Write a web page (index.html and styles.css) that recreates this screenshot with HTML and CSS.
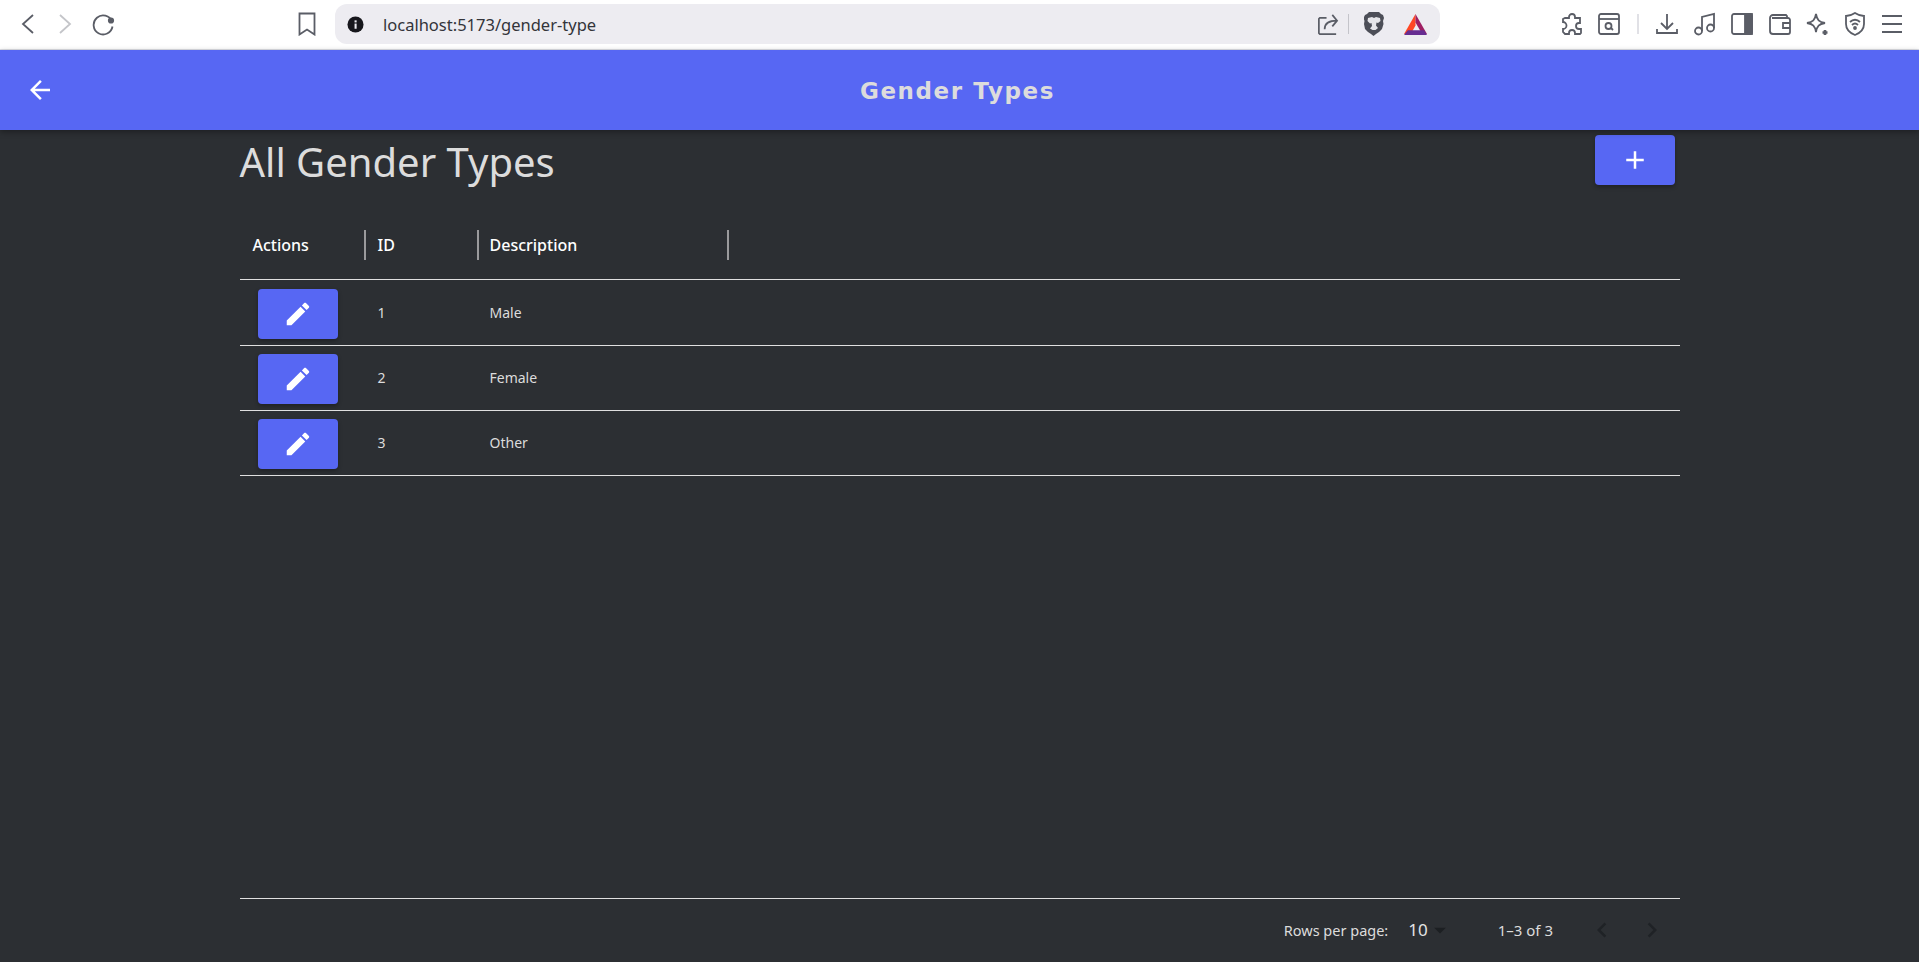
FILE: index.html
```html
<!DOCTYPE html>
<html lang="en">
<head>
  <meta charset="UTF-8" />
  <title>Gender Types</title>
  <link rel="stylesheet" href="styles.css">
</head>
<body>
  <div class="browser-bar">
    <div class="nav-icons">
      <svg class="tool-icon" viewBox="0 0 24 24"><path d="M17 3 7 12l10 9"/></svg>
      <svg class="tool-icon faded" viewBox="0 0 24 24"><path d="m7 3 10 9-10 9"/></svg>
      <svg class="tool-icon" viewBox="0 0 24 24"><path d="M21 9.500a9.500 9.500 0 1 0 .5 5"/><circle class="solid" cx="20" cy="8.500" r="2.200"/></svg>
    </div>
    <svg class="tool-icon bookmark" viewBox="0 0 24 24"><path d="M4.500 1.500h15v21l-7.500-5-7.500 5z"/></svg>
    <div class="url-pill">
      <svg class="info-icon" viewBox="0 0 18 18"><circle cx="9" cy="9" r="8.500"/><rect class="info-mark" x="8" y="8" width="2.200" height="5.500"/><rect class="info-mark" x="8" y="4.600" width="2.200" height="2.200"/></svg>
      <span class="url-text">localhost:5173/gender-type</span>
      <svg class="tool-icon share" viewBox="0 0 24 24"><path d="M11 5H4L3 6v15l1 1h17M9 17c0-6 4-9 13-9M17 2l5 6-5 6"/></svg>
      <span class="pill-divider"></span>
      <svg class="brave-icon" viewBox="0 0 20 24"><path class="brave-shield" d="M5 0h10l2 2 2 1 1 3-1 3 .5 3-1.500 5-3 3-3 2-2.500 2-2.500-2-3-2-3-3L0 12l.5-3-1-3L1 3l2-1z"/><path class="brave-face" d="M4 6l4-1 2 1 2-1 4 1 .5 3-2.500 2-1.500-.5-.5 3 2 2.500-2.500 2h-3L6 16.500l2-2.500-.5-3L6 11.500 3.500 9z"/></svg>
      <svg class="bat-icon" viewBox="0 0 24 22"><path fill="#ff4724" d="M12 0 0 21h7l5-9z"/><path fill="#9e1f63" d="M12 0l12 21h-5l-7-12z"/><path fill="#662d91" d="M0 22h24l-3-5H4z"/></svg>
    </div>
    <div class="ext-icons">
      <svg class="tool-icon" viewBox="0 0 24 24"><path d="M9 5a3 3 0 0 1 6 0v1h5v5h-1a3 3 0 0 0 0 6h2v4l-1 1h-5v-1a3 3 0 0 0-6 0v1H5l-2-2v-3a3 3 0 0 0 0-7V7l2-1h4z"/></svg>
      <svg class="tool-icon" viewBox="0 0 24 24"><rect x="2" y="2" width="20" height="20" rx="2"/><path d="M2 7h20"/><circle cx="11.500" cy="14" r="3"/><path d="m14 16 2 2"/></svg>
      <span class="ext-divider"></span>
      <svg class="tool-icon" viewBox="0 0 24 24"><path d="M12 2v15M6 11l6 6 6-6M2 17v4h20v-4"/></svg>
      <svg class="tool-icon" viewBox="0 0 24 24"><path d="M9 19V5l12-3v14"/><circle cx="5.500" cy="19" r="3.500"/><circle cx="17.500" cy="16" r="3.500"/></svg>
      <svg class="tool-icon" viewBox="0 0 24 24"><rect x="2" y="2" width="20" height="20" rx="2"/><rect class="solid" x="15" y="2" width="7" height="20"/></svg>
      <svg class="tool-icon" viewBox="0 0 24 24"><path d="M19 6V4l-1-1H5a3 3 0 0 0-3 3v13a3 3 0 0 0 3 3h15a2 2 0 0 0 2-2V8a2 2 0 0 0-2-2H4M22 11h-7v5h7"/></svg>
      <svg class="tool-icon" viewBox="0 0 24 24"><path d="M11 2c1 6 3 8 9 9-6 1-8 3-9 9-1-6-3-8-9-9 6-1 8-3 9-9z"/><path class="thick" d="M20 18v5M17.500 20.500h5"/></svg>
      <svg class="tool-icon" viewBox="0 0 24 24"><path d="M12 1c3 2 6 3 9 3v8c0 5-4 9-9 11-5-2-9-6-9-11V4c3 0 6-1 9-3z"/><path d="M7 10c3-3 7-3 10 0M9 13c2-2 4-2 6 0"/><circle class="solid" cx="12" cy="16" r="1"/></svg>
      <svg class="tool-icon" viewBox="0 0 24 24"><path d="M2 4h20M2 12h20M2 20h20"/></svg>
    </div>
  </div>

  <div class="app-header">
    <button class="back-btn" aria-label="Back">
      <svg viewBox="0 0 24 24"><path d="M20 11H7.830l5.590-5.590L12 4l-8 8 8 8 1.410-1.410L7.830 13H20z"/></svg>
    </button>
    <div class="app-title">Gender Types</div>
  </div>

  <div class="content">
    <div class="page-head">
      <h1 class="page-title">All Gender Types</h1>
      <button class="add-btn" aria-label="Add">
        <svg viewBox="0 0 24 24"><path d="M19 13h-6v6h-2v-6H5v-2h6V5h2v6h6v2z"/></svg>
      </button>
    </div>

    <div class="grid">
      <div class="grid-head">
        <div class="col col-actions">Actions</div>
        <div class="col col-id">ID</div>
        <div class="col col-desc">Description</div>
      </div>

      <div class="grid-rows">
        <div class="row">
          <div class="cell-actions">
            <button class="edit-btn" aria-label="Edit"><svg viewBox="0 0 24 24"><path d="M3 17.250V21h3.750L17.810 9.940l-3.750-3.750L3 17.250zM20.710 7.040c.39-.39.39-1.020 0-1.410l-2.340-2.340c-.39-.39-1.020-.39-1.410 0l-1.830 1.830 3.750 3.750 1.830-1.830z"/></svg></button>
          </div>
          <div class="cell cell-id">1</div>
          <div class="cell">Male</div>
        </div>
        <div class="row">
          <div class="cell-actions">
            <button class="edit-btn" aria-label="Edit"><svg viewBox="0 0 24 24"><path d="M3 17.250V21h3.750L17.810 9.940l-3.750-3.750L3 17.250zM20.710 7.040c.39-.39.39-1.020 0-1.410l-2.340-2.340c-.39-.39-1.020-.39-1.410 0l-1.830 1.830 3.750 3.750 1.830-1.830z"/></svg></button>
          </div>
          <div class="cell cell-id">2</div>
          <div class="cell">Female</div>
        </div>
        <div class="row">
          <div class="cell-actions">
            <button class="edit-btn" aria-label="Edit"><svg viewBox="0 0 24 24"><path d="M3 17.250V21h3.750L17.810 9.940l-3.750-3.750L3 17.250zM20.710 7.040c.39-.39.39-1.020 0-1.410l-2.340-2.340c-.39-.39-1.020-.39-1.410 0l-1.830 1.830 3.750 3.750 1.830-1.830z"/></svg></button>
          </div>
          <div class="cell cell-id">3</div>
          <div class="cell">Other</div>
        </div>
      </div>

      <div class="grid-foot">
        <span class="rows-label">Rows per page:</span>
        <span class="rows-select">10<svg viewBox="0 0 24 24"><path d="m7 10 5 5 5-5z"/></svg></span>
        <span class="rows-range">1–3 of 3</span>
        <svg class="page-arrow" viewBox="0 0 24 24"><path d="M15.410 7.410 14 6l-6 6 6 6 1.410-1.410L10.830 12z"/></svg>
        <svg class="page-arrow" viewBox="0 0 24 24"><path d="M10 6 8.590 7.410 13.170 12l-4.580 4.590L10 18l6-6z"/></svg>
      </div>
    </div>
  </div>
</body>
</html>
```

FILE: styles.css
```css
html, body {
  height: 100%;
}
body {
  margin: 0;
  display: flex;
  flex-direction: column;
  overflow: hidden;
  font-family: "Noto Sans", sans-serif;
  background-color: #2c2f33;
  color: #fff;
}
button {
  border: 0;
  padding: 0;
  cursor: pointer;
  color: #fff;
  display: flex;
  align-items: center;
  justify-content: center;
}
svg {
  fill: currentColor;
}

/* browser chrome */
.browser-bar {
  height: 50px;
  box-sizing: border-box;
  flex: none;
  display: flex;
  align-items: center;
  background-color: #fff;
  border-bottom: 1px solid #dfe0e6;
  padding: 0 15px 1px 15.500px;
}
.tool-icon {
  width: 24px;
  height: 24px;
  flex: none;
  fill: none;
  stroke: #5a5d66;
  stroke-width: 1.800;
}
.tool-icon.faded {
  stroke: #c4c5c9;
}
.tool-icon .solid {
  fill: #5a5d66;
}
.tool-icon .thick {
  stroke-width: 2.600;
}
.nav-icons {
  display: flex;
  align-items: center;
  gap: 13.500px;
}
.bookmark {
  margin-left: 180.500px;
}
.url-pill {
  margin-left: 16px;
  width: 1105px;
  height: 40px;
  flex: none;
  display: flex;
  align-items: center;
  background-color: #edecf1;
  border-radius: 12px;
  padding: 0 13px 0 12px;
  box-sizing: border-box;
}
.info-icon {
  width: 17px;
  height: 17px;
  flex: none;
  color: #17171c;
}
.info-mark {
  fill: #edecf1;
}
.url-text {
  margin-left: 19px;
  flex: 1;
  font-size: 16.500px;
  color: #33343a;
}
.share {
  width: 23px;
  height: 23px;
  margin-right: 9px;
}
.pill-divider {
  width: 1px;
  height: 20px;
  background-color: #c4c4ca;
}
.brave-icon {
  margin-left: 15px;
  width: 20px;
  height: 24px;
  flex: none;
}
.brave-shield {
  fill: #4c4e57;
}
.brave-face {
  fill: #e6e6ea;
}
.bat-icon {
  margin-left: 20px;
  width: 23px;
  height: 21px;
  flex: none;
}
.ext-icons {
  margin-left: auto;
  display: flex;
  align-items: center;
  gap: 13.500px;
}
.ext-divider {
  width: 2px;
  height: 20px;
  margin: 0 2.500px;
  background-color: #e1e1e6;
}

/* app header */
.app-header {
  height: 80px;
  flex: none;
  display: grid;
  grid-template-columns: 1fr auto 1fr;
  align-items: center;
  padding: 0 25px;
  background-color: #5767f3;
  box-shadow: 0 2px 6px rgba(0, 0, 0, 0.35);
  position: relative;
}
.back-btn {
  width: 30px;
  height: 30px;
  background: none;
  justify-self: start;
}
.back-btn svg {
  width: 30px;
  height: 30px;
}
.app-title {
  font-family: "DejaVu Sans", sans-serif;
  font-weight: bold;
  font-size: 23px;
  letter-spacing: 1.600px;
  color: #dcdcdc;
  margin: 2px 4px 0 0;
}

/* page content */
.content {
  flex: 1;
  width: 1440px;
  margin: 0 auto;
  display: flex;
  flex-direction: column;
  min-height: 0;
}
.page-head {
  display: flex;
  justify-content: space-between;
  align-items: flex-start;
  padding: 5px 5px 0 0;
}
.page-title {
  margin: 0;
  font-size: 40px;
  line-height: 54px;
  font-weight: normal;
  color: #dcdcdc;
}
.add-btn, .edit-btn {
  width: 80px;
  height: 50px;
  background-color: #5767f3;
  border-radius: 4px;
  box-shadow: 0 2px 4px rgba(0, 0, 0, 0.3);
}
.add-btn svg, .edit-btn svg {
  width: 30px;
  height: 30px;
}

/* table */
.grid {
  flex: 1;
  display: flex;
  flex-direction: column;
  margin-top: 25px;
  min-height: 0;
}
.grid-head {
  height: 62px;
  padding-bottom: 3px;
  flex: none;
  display: flex;
  align-items: center;
  border-bottom: 1px solid #e0e0e0;
}
.col {
  height: 30px;
  line-height: 30px;
  box-sizing: border-box;
  padding-left: 12px;
  font-size: 16px;
  font-weight: 500;
  color: #fff;
  border-right: 2px solid #9a9a9c;
}
.col-actions {
  width: 126px;
  padding-left: 13px;
}
.col-id {
  width: 113px;
}
.col-desc {
  width: 250px;
  padding-left: 11px;
}
.grid-rows {
  flex: 1;
  padding-top: 1px;
}
.row {
  height: 64px;
  display: flex;
  align-items: center;
  border-bottom: 1px solid #e0e0e0;
  font-size: 14px;
  color: #dcdcdc;
}
.cell {
  padding-left: 11px;
  margin-bottom: 2px;
}
.cell-actions {
  width: 126px;
  box-sizing: border-box;
  padding-left: 18px;
}
.edit-btn {
  margin-top: 1px;
}
.cell-id {
  width: 113px;
  box-sizing: border-box;
  padding-left: 12px;
}
.grid-foot {
  height: 61px;
  padding: 0 12.500px 2px 0;
  flex: none;
  display: flex;
  align-items: center;
  justify-content: flex-end;
  border-top: 1px solid #e0e0e0;
  font-size: 14.500px;
  color: #dcdcdc;
}
.rows-select {
  margin-left: 20px;
  display: flex;
  align-items: center;
  font-size: 17px;
  color: #e4e4e4;
}
.rows-select svg {
  width: 28px;
  height: 28px;
  margin: 0 -2px;
  color: #1c1f22;
}
.rows-range {
  margin-left: 46px;
  margin-right: 34px;
  font-size: 15px;
}
.page-arrow {
  width: 30px;
  height: 30px;
  color: #1f2226;
}
.page-arrow + .page-arrow {
  margin-left: 20px;
}
```
